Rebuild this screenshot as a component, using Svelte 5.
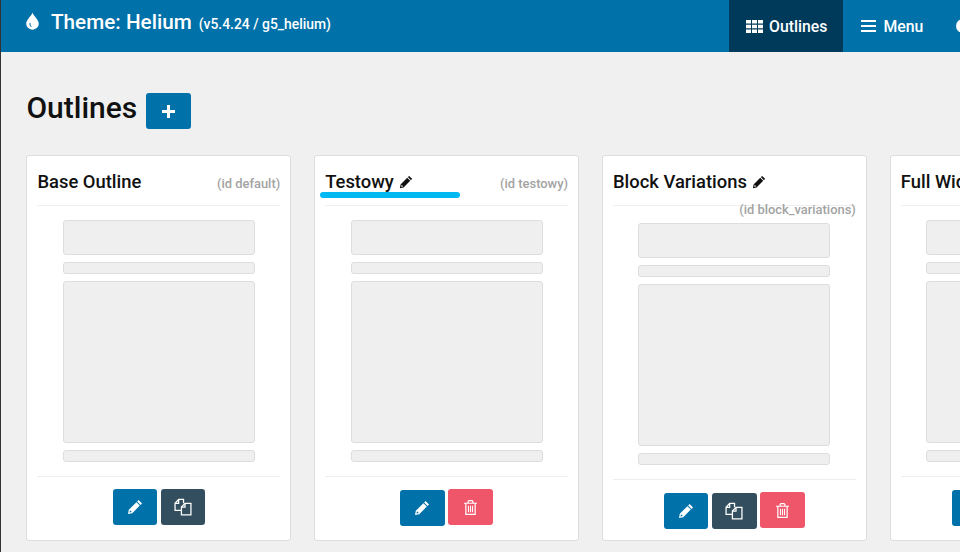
<script lang="ts">
	interface Outline {
		title: string;
		id: string;
		editable?: boolean;
		copy?: boolean;
		remove?: boolean;
		wrapped?: boolean;
	}

	const outlines: Outline[] = [
		{ title: 'Base Outline', id: 'default', copy: true },
		{ title: 'Testowy', id: 'testowy', editable: true, remove: true },
		{ title: 'Block Variations', id: 'block_variations', editable: true, copy: true, remove: true, wrapped: true },
		{ title: 'Full Width', id: 'full_width', editable: true, copy: true, remove: true }
	];
</script>

{#snippet pencil()}
	<svg class="icon-pencil" viewBox="0 0 16 16" aria-hidden="true">
		<path fill="currentColor" d="M11.6 1 15 4.4 13.6 5.9 10.1 2.4ZM9.4 3.2 12.8 6.6 5.2 14.2 1 15 1.8 10.8ZM3 11.2 2.5 13.5 4.8 13 4.1 12.2 3.8 11.9Z" fill-rule="evenodd" />
	</svg>
{/snippet}

<div class="page">
	<span class="edge-mark first"></span>
	<span class="edge-mark second"></span>

	<header class="topbar">
		<div class="brand">
			<svg class="icon-drop" viewBox="0 0 12 16" aria-hidden="true">
				<path fill="currentColor" fill-rule="evenodd" d="M6 .2C6.6 3 11.8 7 11.8 10.4 11.8 13.6 9.2 16 6 16S.2 13.6.2 10.4C.2 7 5.4 3 6 .2ZM3.2 10.2C2.9 11.9 4 13.6 6 13.8 4.6 13 4 11.8 4.2 10.2 4.3 9.4 3.3 9.4 3.2 10.2Z" />
			</svg>
			<h1 class="theme-name">Theme: Helium</h1>
			<small class="theme-meta">(v5.4.24 / g5_helium)</small>
		</div>
		<nav class="nav">
			<span class="nav-item active">
				<svg class="nav-icon" viewBox="0 0 17 13" aria-hidden="true">
					<path fill="currentColor" d="M0 0h5v3.6H0zM6 0h5v3.6H6zM12 0h5v3.6h-5zM0 4.7h5v3.6H0zM6 4.7h5v3.6H6zM12 4.7h5v3.6h-5zM0 9.4h5V13H0zM6 9.4h5V13H6zM12 9.4h5V13h-5z" />
				</svg>
				Outlines
			</span>
			<span class="nav-item">
				<svg class="nav-icon menu" viewBox="0 0 15 12" aria-hidden="true">
					<path fill="currentColor" d="M0 0h15v2H0zM0 5h15v2H0zM0 10h15v2H0z" />
				</svg>
				Menu
			</span>
			<span class="nav-item">
				<svg class="nav-icon globe" viewBox="0 0 14 14" aria-hidden="true">
					<circle cx="7" cy="7" r="7" fill="currentColor" />
				</svg>
				Platform Settings
			</span>
		</nav>
	</header>

	<main class="content">
		<div class="heading">
			<h2 class="heading-title">Outlines</h2>
			<button class="btn add" aria-label="Add outline">
				<svg viewBox="0 0 12 12" class="icon-plus" aria-hidden="true">
					<path fill="currentColor" d="M4.6 0h2.8v4.6H12v2.8H7.4V12H4.6V7.4H0V4.6h4.6z" />
				</svg>
			</button>
		</div>

		<div class="cards">
			{#each outlines as outline}
				<article class="card">
					<div class="card-head">
						<h3 class="card-title">
							{outline.title}
							{#if outline.editable}
								{@render pencil()}
							{/if}
						</h3>
						<span class="card-id">(id {outline.id})</span>
					</div>

					<div class="preview" class:wrapped={outline.wrapped}>
						<div class="block top"></div>
						<div class="block bar"></div>
						<div class="block main"></div>
						<div class="block bar"></div>
					</div>

					<div class="actions">
						<button class="btn action" aria-label="Edit">
							{@render pencil()}
						</button>
						{#if outline.copy}
							<button class="btn action copy" aria-label="Duplicate">
								<svg class="icon-copy" viewBox="0 0 17 17" fill="none" stroke="currentColor" stroke-width="1.2" aria-hidden="true">
									<path d="M7 11.6H1V5L4.4 1.2H9V5M4.4 1.2V5H1" />
									<path fill="#334e5e" d="M7 16V8.6L10.4 5H16V16Z" />
									<path d="M10.4 5V8.6H7" />
								</svg>
							</button>
						{/if}
						{#if outline.remove}
							<button class="btn action danger" aria-label="Delete">
								<svg class="icon-trash" viewBox="0 0 14 16" fill="none" stroke="currentColor" stroke-width="1.3" aria-hidden="true">
									<path d="M0 3.4H14M2 3.4V15.4H12V3.4M4.4 3.2V1.6C4.6.9 5 .6 5.6.6H8.4C9 .6 9.4.9 9.6 1.6V3.2" />
									<path stroke-width="1.2" d="M4.8 6V13M7 6V13M9.2 6V13" />
								</svg>
							</button>
						{/if}
					</div>
				</article>
			{/each}
		</div>
	</main>

	<span class="highlight"></span>
</div>

<style>
	:global(body) {
		margin: 0;
		background: #f0f0f0;
	}
	.page {
		position: relative;
		width: 960px;
		height: 552px;
		overflow: hidden;
		box-sizing: border-box;
		border-left: 1px solid #333;
		background: #f0f0f0;
		font-family: Roboto, "Liberation Sans", sans-serif;
		color: #111;
	}
	.edge-mark {
		position: absolute;
		left: -1px;
		width: 1px;
		background: #0071a9;
	}
	.edge-mark.first {
		top: 383px;
		height: 9px;
	}
	.edge-mark.second {
		top: 407px;
		height: 9px;
	}

	/* ===== Top bar ===== */
	.topbar {
		display: flex;
		justify-content: space-between;
		height: 52px;
		background: #0071a9;
		color: #fff;
	}
	.brand {
		display: flex;
		align-items: baseline;
		padding-left: 25px;
	}
	.icon-drop {
		align-self: flex-start;
		width: 13px;
		height: 18px;
		margin: 12px 12px 0 0;
	}
	.theme-name {
		margin: 0;
		font-size: 20.7px;
		font-weight: 500;
		line-height: 44px;
	}
	.theme-meta {
		margin-left: 7px;
		font-size: 13.9px;
		font-weight: 500;
	}
	.nav {
		display: flex;
		flex-shrink: 0;
		width: 231px;
	}
	.nav-item {
		display: flex;
		align-items: center;
		flex-shrink: 0;
		padding: 0 16px 0 17px;
		font-size: 15.8px;
		font-weight: 500;
		white-space: nowrap;
	}
	.nav-item.active {
		background: #003a5a;
	}
	.nav-icon {
		width: 17px;
		height: 13px;
		margin-right: 6px;
	}
	.nav-icon.menu {
		width: 15px;
		height: 12px;
		margin-right: 7px;
		margin-left: 1px;
	}
	.nav-icon.globe {
		width: 14px;
		height: 14px;
	}

	/* ===== Content ===== */
	.content {
		padding: 41px 0 0 25.4px;
	}
	.heading {
		display: flex;
		align-items: flex-start;
		height: 62px;
	}
	.heading-title {
		margin: 0 9px 0 0;
		font-size: 30px;
		font-weight: 500;
		line-height: 30px;
	}
	.btn {
		display: flex;
		align-items: center;
		justify-content: center;
		padding: 0;
		border: 0;
		border-radius: 3px;
		background: #0071a9;
		color: #fff;
	}
	.add {
		width: 45px;
		height: 36px;
	}
	.icon-plus {
		width: 13px;
		height: 13px;
	}

	/* ===== Outline cards ===== */
	.cards {
		display: flex;
		align-items: stretch;
		gap: 23px;
		width: 1400px;
	}
	.card {
		display: flex;
		flex-direction: column;
		flex: 0 0 264.8px;
		box-sizing: border-box;
		padding: 0 10px 11px;
		background: #fff;
		border: 1px solid #ddd;
		border-radius: 3px;
	}
	.card-head {
		display: flex;
		flex-wrap: wrap;
		justify-content: space-between;
		align-items: baseline;
		align-content: flex-start;
		box-sizing: border-box;
		height: 50px;
		padding-top: 15px;
		border-bottom: 1px solid #eee;
	}
	.card-title {
		display: flex;
		align-items: center;
		gap: 5.5px;
		margin: 0 0 9px;
		font-size: 18.4px;
		font-weight: 500;
		line-height: 22px;
		white-space: nowrap;
	}
	.card-title .icon-pencil {
		width: 14px;
		height: 14px;
		color: #111;
	}
	.card-id {
		margin-left: auto;
		color: #a3a3a3;
		font-size: 12.9px;
		font-weight: 500;
		line-height: 16px;
	}
	.preview {
		display: flex;
		flex-direction: column;
		gap: 7px;
		align-self: center;
		width: 192px;
		padding-top: 14px;
		padding-bottom: 14px;
	}
	.preview.wrapped {
		padding-top: 17px;
	}
	.block {
		box-sizing: border-box;
		background: #efefef;
		border: 1px solid #ddd;
		border-radius: 3px;
	}
	.block.top {
		height: 35px;
	}
	.block.bar {
		height: 12px;
	}
	.block.main {
		height: 162px;
	}
	.actions {
		display: flex;
		justify-content: center;
		align-items: flex-end;
		gap: 3.8px;
		padding-top: 12px;
		border-top: 1px solid #eee;
	}
	.action {
		width: 44.4px;
		height: 36px;
	}
	.action.copy {
		background: #334e5e;
	}
	.action.danger {
		margin-bottom: 1px;
		background: #f0566a;
	}
	.action .icon-pencil {
		width: 16px;
		height: 16px;
	}
	.icon-copy {
		width: 18px;
		height: 18px;
	}
	.icon-trash {
		width: 13px;
		height: 15px;
	}

	/* Marker drawn over the second card */
	.highlight {
		position: absolute;
		left: 319px;
		top: 192px;
		width: 140px;
		height: 6px;
		border-radius: 3px;
		background: #00b9f2;
	}
</style>
